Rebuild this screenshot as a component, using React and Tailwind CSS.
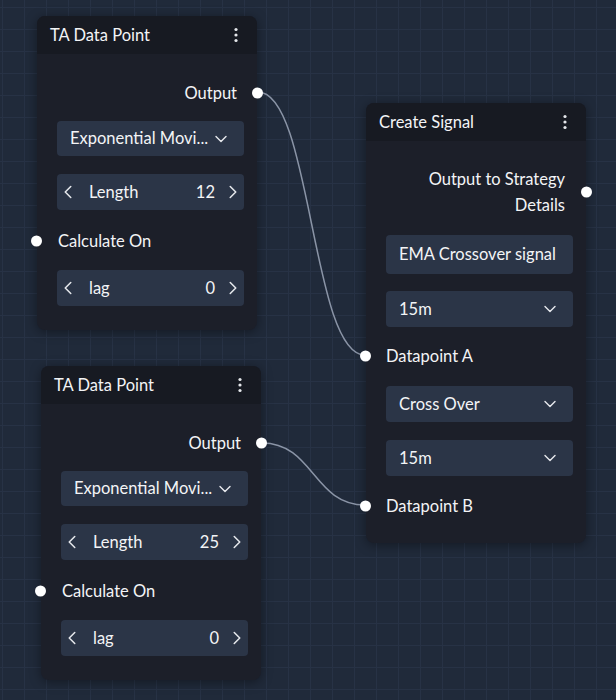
import { ChevronDown, ChevronLeft, ChevronRight } from "lucide-react";

function MenuDots() {
    return (
        <svg width="4" height="16" viewBox="0 0 4 16" className="text-gray-200">
            <circle cx="2" cy="2.5" r="1.6" fill="currentColor" />
            <circle cx="2" cy="8" r="1.6" fill="currentColor" />
            <circle cx="2" cy="13.5" r="1.6" fill="currentColor" />
        </svg>
    );
}

function Select({ label, className = "" }) {
    return (
        <div className={"h-[35px] rounded bg-[#2b3547] flex items-center justify-between pl-[13px] " + className}>
            <span>{label}</span>
            <ChevronDown className="w-[20px] h-[20px] text-gray-200" strokeWidth={1.7} />
        </div>
    );
}

function Stepper({ label, value, className = "" }) {
    return (
        <div className={"h-[36px] rounded bg-[#2b3547] flex items-center " + className}>
            <ChevronLeft className="w-[22px] h-[22px] text-gray-200" strokeWidth={1.7} />
            <span className="ml-[10px] flex-1">{label}</span>
            <span>{value}</span>
            <ChevronRight className="w-[22px] h-[22px] ml-[7px] text-gray-200" strokeWidth={1.7} />
        </div>
    );
}

function NodeHeader({ title }) {
    return (
        <div className="h-[38px] bg-[#171a22] rounded-t-lg flex items-center justify-between pl-[13px] pr-[19px]">
            <span className="text-[16.5px] text-gray-100">{title}</span>
            <MenuDots />
        </div>
    );
}

function TADataPoint({ pos, length }) {
    return (
        <div className={"absolute w-[220px] rounded-lg bg-[#1c1f29] shadow-[0_2px_12px_rgba(0,0,0,0.4)] " + pos}>
            <NodeHeader title="TA Data Point" />
            <div className="flex flex-col pl-5 pr-[13px] pt-[25px] pb-[24px]">
                <div className="relative h-[28px] flex items-center justify-end pr-[7px]">
                    <span>Output</span>
                    <span className="absolute top-1/2 -translate-y-1/2 right-[-19px] w-[11px] h-[11px] rounded-full bg-white" />
                </div>
                <Select label="Exponential Movi..." className="mt-[14px] pr-[13px]" />
                <Stepper label="Length" value={length} className="mt-[18px]" />
                <div className="relative h-[28px] flex items-center mt-[17px] pl-px">
                    <span className="absolute top-1/2 -translate-y-1/2 left-[-26px] w-[11px] h-[11px] rounded-full bg-white" />
                    <span>Calculate On</span>
                </div>
                <Stepper label="lag" value="0" className="mt-[15px]" />
            </div>
        </div>
    );
}

function CreateSignal() {
    return (
        <div className="absolute left-[366px] top-[103px] w-[220px] rounded-lg bg-[#1c1f29] shadow-[0_2px_12px_rgba(0,0,0,0.4)]">
            <NodeHeader title="Create Signal" />
            <div className="flex flex-col pl-5 pr-[13px] pt-[25px] pb-[23px]">
                <div className="relative flex items-center justify-end pr-[8px] text-right leading-[26px]">
                    <span>
                        Output to Strategy
                        <br />
                        Details
                    </span>
                    <span className="absolute top-1/2 -translate-y-1/2 right-[-19px] w-[11px] h-[11px] rounded-full bg-white" />
                </div>
                <div className="mt-[17px] h-[39px] rounded bg-[#2b3547] flex items-center pl-[13px]">
                    EMA Crossover signal
                </div>
                <Select label="15m" className="mt-[17px] h-[36px] pr-[13px]" />
                <div className="relative h-[28px] flex items-center mt-[15px]">
                    <span className="absolute top-1/2 -translate-y-1/2 left-[-26px] w-[11px] h-[11px] rounded-full bg-white" />
                    <span>Datapoint A</span>
                </div>
                <Select label="Cross Over" className="mt-[16px] h-[36px] pr-[13px]" />
                <Select label="15m" className="mt-[18px] h-[36px] pr-[13px]" />
                <div className="relative h-[28px] flex items-center mt-[16px]">
                    <span className="absolute top-1/2 -translate-y-1/2 left-[-26px] w-[11px] h-[11px] rounded-full bg-white" />
                    <span>Datapoint B</span>
                </div>
            </div>
        </div>
    );
}

export default function App() {
    return (
        <div
            className="relative w-[616px] h-[700px] overflow-hidden bg-[#202a3a] bg-[linear-gradient(to_right,#273245_1px,transparent_1px),linear-gradient(to_bottom,#273245_1px,transparent_1px)] bg-[size:22px_22px] bg-[position:2px_7px] text-[16.5px] text-gray-100"
            style={{ fontFamily: "Lato, 'Noto Sans', sans-serif" }}
        >
            {/* edges */}
            <svg className="absolute inset-0" width="616" height="700">
                <path d="M258,92 C311.5,92 311.5,355 365,355" fill="none" stroke="#8a94a6" strokeWidth="1.5" />
                <path d="M262,443 C313.5,443 313.5,505 365,505" fill="none" stroke="#8a94a6" strokeWidth="1.5" />
            </svg>

            <TADataPoint pos="left-[37px] top-[16px]" length="12" />
            <TADataPoint pos="left-[41px] top-[366px]" length="25" />
            <CreateSignal />
        </div>
    );
}
